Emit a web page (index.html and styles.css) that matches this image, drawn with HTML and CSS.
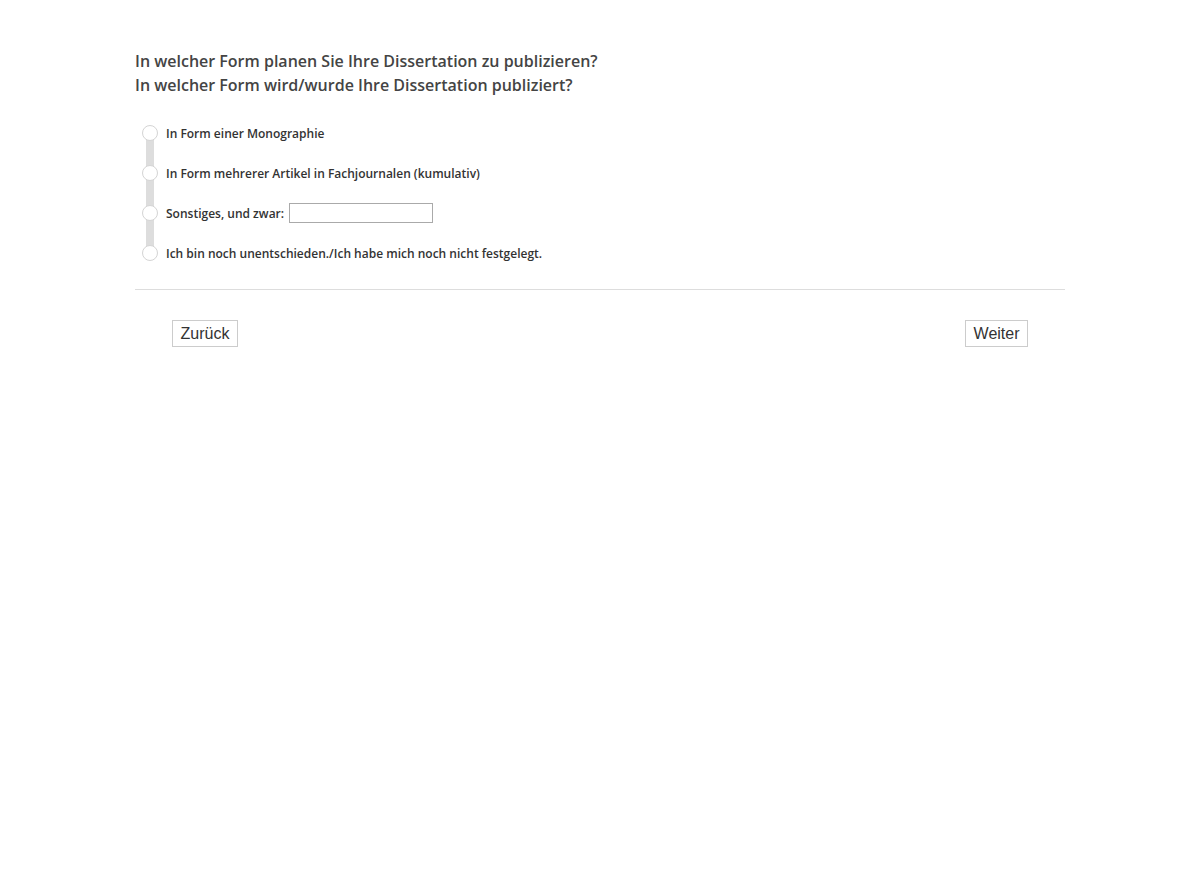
FILE: index.html
```html
<!DOCTYPE html>
<html lang="de">
<head>
    <meta charset="UTF-8">
    <meta name="viewport" content="width=device-width, initial-scale=1.0">
    <title>Umfrage</title>
    <link rel="stylesheet" href="styles.css">
</head>
<body>
    <div class="page">
        <h1 class="question">In welcher Form planen Sie Ihre Dissertation zu publizieren?<br>In welcher Form wird/wurde Ihre Dissertation publiziert?</h1>

        <div class="options">
            <label class="option">
                <span class="radio"></span>
                <span>In Form einer Monographie</span>
            </label>
            <label class="option">
                <span class="radio"></span>
                <span>In Form mehrerer Artikel in Fachjournalen (kumulativ)</span>
            </label>
            <label class="option">
                <span class="radio"></span>
                <span>Sonstiges, und zwar:</span>
                <input type="text" class="other">
            </label>
            <label class="option">
                <span class="radio"></span>
                <span>Ich bin noch unentschieden./Ich habe mich noch nicht festgelegt.</span>
            </label>
        </div>

        <div class="nav">
            <button>Zurück</button>
            <button>Weiter</button>
        </div>
    </div>
</body>
</html>
```
FILE: styles.css
```css
body {
    margin: 0;
    background: #fff;
    font-family: 'Open Sans', sans-serif;
    color: #333;
}
.page {
    width: 930px;
    margin: 0 auto;
    padding-top: 49px;
}
.question {
    margin: 0;
    font-size: 16px;
    font-weight: 600;
    line-height: 24px;
    color: #444;
}
.options {
    position: relative;
    margin-top: 16px;
    padding-bottom: 16px;
    border-bottom: 1px solid #ddd;
}
/* graue Schiene hinter den Radio-Kreisen */
.options::before {
    content: "";
    position: absolute;
    left: 11px;
    width: 8px;
    top: 20px;
    bottom: 36px;
    background: #ddd;
}
.option {
    position: relative;
    display: flex;
    align-items: center;
    height: 40px;
    font-size: 12px;
    font-weight: 600;
    color: #333;
}
.radio {
    width: 16px;
    height: 16px;
    margin-left: 7px;
    margin-right: 8px;
    border: 1px solid #d4d4d4;
    border-radius: 50%;
    background: #fff;
    box-sizing: border-box;
    flex-shrink: 0;
    position: relative;
}
.other {
    width: 144px;
    height: 20px;
    margin-left: 5px;
    padding: 0 4px;
    border: 1px solid #aaa;
    box-sizing: border-box;
    font-size: 12px;
}
.nav {
    display: flex;
    justify-content: space-between;
    padding: 30px 37px 0 37px;
}
.nav button {
    font-family: 'Liberation Sans', Arial, sans-serif;
    font-size: 16px;
    color: #333;
    background: #fff;
    border: 1px solid #ccc;
    padding: 3px 7.5px;
    height: 27px;
    cursor: pointer;
}
```
